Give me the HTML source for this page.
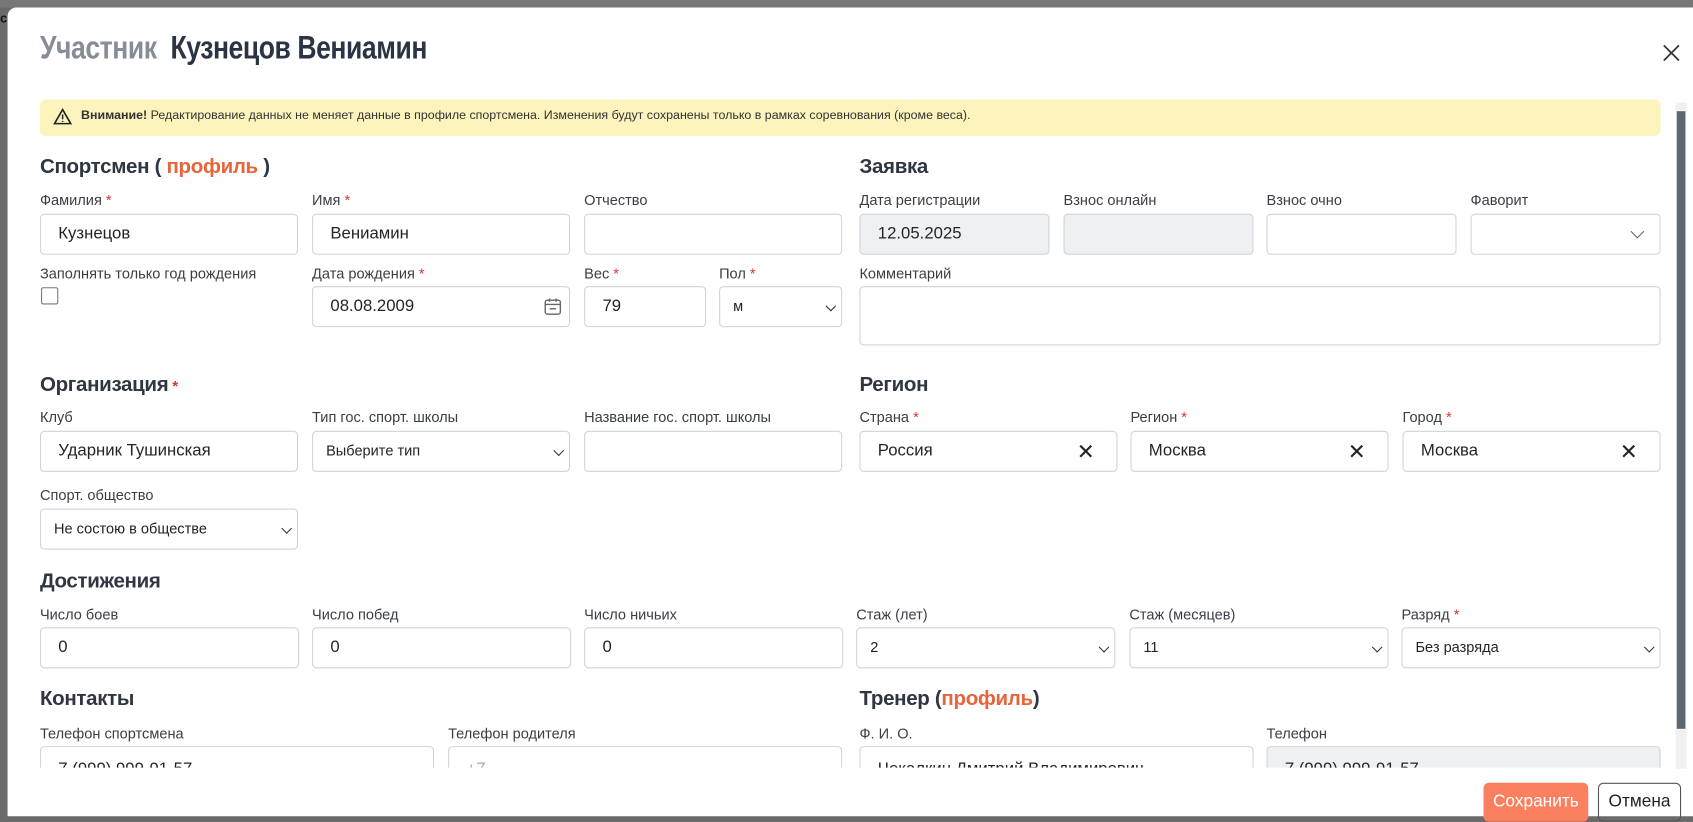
<!DOCTYPE html>
<html><head><meta charset="utf-8"><style>
*{box-sizing:border-box;margin:0;padding:0}
html,body{width:1693px;height:822px;overflow:hidden}
body{background:#6b6b6b;font-family:"Liberation Sans",sans-serif;color:#212529;position:relative}
#wrap{position:absolute;left:0;top:0;width:1568px;height:762px;transform:scale(1.0797);transform-origin:0 0}
.modal{position:absolute;left:7px;top:7px;width:1600px;height:749px;background:#fff;border-radius:8px 0 0 0}
.a{position:absolute}
.title{left:37px;top:28px;font-family:"Liberation Sans Narrow","Liberation Sans",sans-serif;font-weight:bold;font-size:30px;color:#2b3445;letter-spacing:-0.5px;transform:scaleX(.82);transform-origin:left}
.title span{color:#878d96}
.alert{left:37px;top:92px;width:1501px;height:34px;background:#fcf3bd;border-radius:6px;font-size:11.5px;padding:9px 0 0 38px;color:#333}
.h{font-size:19px;font-weight:bold;color:#2f3642;letter-spacing:-0.3px}
.o{color:#e8643a}
.l{font-size:13.5px;color:#3a3f46}
.l i{color:#d33;font-style:normal}
.in{position:absolute;height:38px;border:1px solid #ced4da;border-radius:4px;font-size:15.5px;padding:9px 16px;color:#212529;background:#fff}
.sel{font-size:13.5px;padding:10px 12px}
.dis{background:#eff0f2}
.chev{position:absolute;right:6px;top:14px;width:7px;height:7px;border-right:1.3px solid #333;border-bottom:1.3px solid #333;transform:rotate(45deg)}
.x{position:absolute;right:20px;top:6px;font-size:20px}
.clip{position:absolute;overflow:hidden}
</style></head><body>
<div id="wrap">
<div class="a" style="left:0;top:0;width:1568px;height:7px;background:#777"></div>
<div class="a" style="left:0;top:10px;font-size:12px;font-weight:bold;color:#111">c</div>
<div class="modal">
<div class="clip" style="left:-7px;top:-7px;width:1667px;height:711px">
<div class="a title"><span>Участник</span>&nbsp; Кузнецов Вениамин</div>
<div class="a alert"><b>Внимание!</b> Редактирование данных не меняет данные в профиле спортсмена. Изменения будут сохранены только в рамках соревнования (кроме веса).</div>
<svg class="a" style="left:49px;top:100px" width="18" height="16" viewBox="0 0 18 16"><path d="M9 1.5L16.5 14.5H1.5Z" fill="none" stroke="#222" stroke-width="1.5"/><path d="M9 6v4.5M9 12v1" stroke="#222" stroke-width="1.4"/></svg>

<div class="a h" style="left:37px;top:144px">Спортсмен ( <span class="o">профиль</span> )</div>
<div class="a h" style="left:796px;top:144px">Заявка</div>
<div class="a l" style="left:37px;top:178px">Фамилия <i>*</i></div>
<div class="a l" style="left:289px;top:178px">Имя <i>*</i></div>
<div class="a l" style="left:541px;top:178px">Отчество</div>
<div class="a l" style="left:796px;top:178px">Дата регистрации</div>
<div class="a l" style="left:985px;top:178px">Взнос онлайн</div>
<div class="a l" style="left:1173px;top:178px">Взнос очно</div>
<div class="a l" style="left:1362px;top:178px">Фаворит</div>
<div class="in" style="left:37px;top:198px;width:239px">Кузнецов</div>
<div class="in" style="left:289px;top:198px;width:239px">Вениамин</div>
<div class="in" style="left:541px;top:198px;width:239px"></div>
<div class="in dis" style="left:796px;top:198px;width:176px">12.05.2025</div>
<div class="in dis" style="left:985px;top:198px;width:176px"></div>
<div class="in" style="left:1173px;top:198px;width:176px"></div>
<div class="in" style="left:1362px;top:198px;width:176px"><div class="chev" style="right:16px;top:11px;width:9px;height:9px;border-color:#666"></div></div>

<div class="a l" style="left:37px;top:246px">Заполнять только год рождения</div>
<div class="a" style="left:38px;top:266px;width:16px;height:16px;border:1.5px solid #777;border-radius:2px"></div>
<div class="a l" style="left:289px;top:246px">Дата рождения <i>*</i></div>
<div class="a l" style="left:541px;top:246px">Вес <i>*</i></div>
<div class="a l" style="left:666px;top:246px">Пол <i>*</i></div>
<div class="a l" style="left:796px;top:246px">Комментарий</div>
<div class="in" style="left:289px;top:265px;width:239px">08.08.2009
<svg style="position:absolute;right:6px;top:9px" width="18" height="18" viewBox="0 0 18 18"><rect x="2" y="3" width="14" height="13" rx="2" fill="none" stroke="#666" stroke-width="1.3"/><path d="M2 7h14M6 1.5v3M12 1.5v3M6 11h6" stroke="#666" stroke-width="1.3"/></svg></div>
<div class="in" style="left:541px;top:265px;width:113px">79</div>
<div class="in sel" style="left:666px;top:265px;width:114px">м<div class="chev"></div></div>
<div class="in" style="left:796px;top:265px;width:742px;height:55px"></div>

<div class="a h" style="left:37px;top:346px">Организация<span style="color:#d33;font-size:14px"> *</span></div>
<div class="a h" style="left:796px;top:346px">Регион</div>
<div class="a l" style="left:37px;top:379px">Клуб</div>
<div class="a l" style="left:289px;top:379px">Тип гос. спорт. школы</div>
<div class="a l" style="left:541px;top:379px">Название гос. спорт. школы</div>
<div class="a l" style="left:796px;top:379px">Страна <i>*</i></div>
<div class="a l" style="left:1047px;top:379px">Регион <i>*</i></div>
<div class="a l" style="left:1299px;top:379px">Город <i>*</i></div>
<div class="in" style="left:37px;top:399px;width:239px">Ударник Тушинская</div>
<div class="in sel" style="left:289px;top:399px;width:239px">Выберите тип<div class="chev"></div></div>
<div class="in" style="left:541px;top:399px;width:239px"></div>
<div class="in" style="left:796px;top:399px;width:239px">Россия<span class="x">✕</span></div>
<div class="in" style="left:1047px;top:399px;width:239px">Москва<span class="x">✕</span></div>
<div class="in" style="left:1299px;top:399px;width:239px">Москва<span class="x">✕</span></div>
<div class="a l" style="left:37px;top:451px">Спорт. общество</div>
<div class="in sel" style="left:37px;top:471px;width:239px">Не состою в обществе<div class="chev"></div></div>

<div class="a h" style="left:37px;top:528px">Достижения</div>
<div class="a l" style="left:37px;top:562px">Число боев</div>
<div class="a l" style="left:289px;top:562px">Число побед</div>
<div class="a l" style="left:541px;top:562px">Число ничьих</div>
<div class="a l" style="left:793px;top:562px">Стаж (лет)</div>
<div class="a l" style="left:1046px;top:562px">Стаж (месяцев)</div>
<div class="a l" style="left:1298px;top:562px">Разряд <i>*</i></div>
<div class="in" style="left:37px;top:581px;width:240px">0</div>
<div class="in" style="left:289px;top:581px;width:240px">0</div>
<div class="in" style="left:541px;top:581px;width:240px">0</div>
<div class="in sel" style="left:793px;top:581px;width:240px">2<div class="chev"></div></div>
<div class="in sel" style="left:1046px;top:581px;width:240px">11<div class="chev"></div></div>
<div class="in sel" style="left:1298px;top:581px;width:240px">Без разряда<div class="chev"></div></div>

<div class="a h" style="left:37px;top:637px">Контакты</div>
<div class="a h" style="left:796px;top:637px">Тренер (<span class="o">профиль</span>)</div>
<div class="a l" style="left:37px;top:672px">Телефон спортсмена</div>
<div class="a l" style="left:415px;top:672px">Телефон родителя</div>
<div class="a l" style="left:796px;top:672px">Ф. И. О.</div>
<div class="a l" style="left:1173px;top:672px">Телефон</div>
<div class="in" style="left:37px;top:691px;width:365px;padding-top:12px">7 (999) 999-91-57</div>
<div class="in" style="left:415px;top:691px;width:365px;color:#aaa;padding-top:12px">+7</div>
<div class="in" style="left:796px;top:691px;width:365px;padding-top:12px">Чекалкин Дмитрий Владимирович</div>
<div class="in dis" style="left:1173px;top:691px;width:365px;padding-top:12px">7 (999) 999-91-57</div>
</div>
<div class="a" style="left:1545px;top:88px;width:10px;height:617px;background:#f1f1f1"></div>
<div class="a" style="left:1546px;top:96px;width:8px;height:572px;background:#5d6670"></div>
<svg class="a" style="left:1532px;top:33px" width="18" height="18" viewBox="0 0 18 18"><path d="M2 2L16 16M16 2L2 16" stroke="#333" stroke-width="1.6"/></svg>
<div class="a" style="left:1367px;top:718px;width:97px;height:36px;background:#fa8060;border-radius:5px;color:#fff;font-size:16px;text-align:center;line-height:36px">Сохранить</div>
<div class="a" style="left:1473px;top:718px;width:77px;height:36px;border:1.3px solid #555;border-radius:5px;color:#222;font-size:16px;text-align:center;line-height:34px">Отмена</div>
</div>
</div>
</body></html>
